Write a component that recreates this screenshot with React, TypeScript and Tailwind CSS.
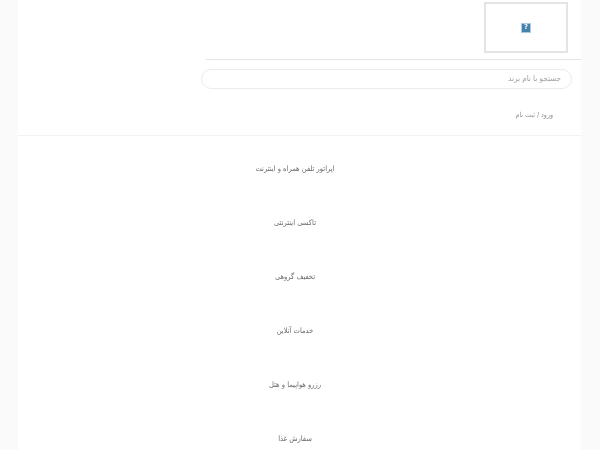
const navItems = [
  'اپراتور تلفن همراه و اینترنت',
  'تاکسی اینترنتی',
  'تخفیف گروهی',
  'خدمات آنلاین',
  'رزرو هواپیما و هتل',
  'سفارش غذا',
];

function BrokenImage() {
  return (
    <div className="flex h-[51px] w-[84px] items-center justify-center border-2 border-[#e4e4e4] bg-white">
      <div className="flex h-[10px] w-[10px] items-center justify-center border border-[#a9cbe0] bg-[#4583ad] text-[7px] leading-none font-bold text-white blur-[0.3px]">
        ?
      </div>
    </div>
  );
}

export default function App() {
  return (
    <div className="h-[450px] overflow-hidden bg-[#fafafa] font-['DejaVu_Sans_Condensed','DejaVu_Sans',sans-serif]" dir="rtl">
      <div className="mr-[19px] ml-[18px] bg-white">
        <header className="border-b border-[#f2f2f2]">
          <div className="flex justify-start pt-[2px] pr-[13px]">
            <BrokenImage />
          </div>
          <div className="mt-[6px] ml-[188px] h-px bg-[#e6e6e6]" />
          <div className="mt-[9px] mr-[9px] ml-[183px] flex h-[20px] items-center rounded-full border border-[#ebebeb] pr-[10px] text-[8px] text-[#a0a0a0]">
            <span className="blur-[0.3px]">جستجو با نام برند</span>
          </div>
          <div className="mt-[21px] mr-[28px] h-[25px] text-[7px] leading-[10px] text-[#909090]">
            <span className="blur-[0.3px]">ورود / ثبت نام</span>
          </div>
        </header>
        <nav className="flex flex-col items-center pt-[27px] pr-[9px]">
          {navItems.map((item) => (
            <a key={item} className="h-[54px] text-[7.5px] leading-[12px] text-[#6a6a6a] blur-[0.3px]">
              {item}
            </a>
          ))}
        </nav>
      </div>
    </div>
  );
}
